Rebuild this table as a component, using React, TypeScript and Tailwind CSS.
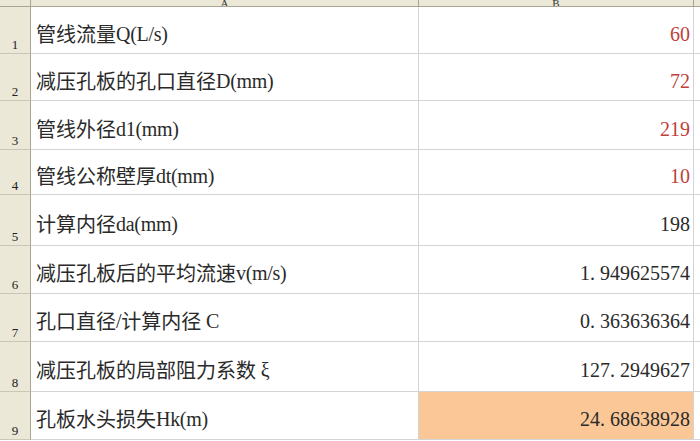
type Row = { n: number; label: string; value: string; h: number; red?: boolean; fill?: boolean };

const rows: Row[] = [
  { n: 1, label: "管线流量Q(L/s)", value: "60", h: 47, red: true },
  { n: 2, label: "减压孔板的孔口直径D(mm)", value: "72", h: 47, red: true },
  { n: 3, label: "管线外径d1(mm)", value: "219", h: 49, red: true },
  { n: 4, label: "管线公称壁厚dt(mm)", value: "10", h: 45, red: true },
  { n: 5, label: "计算内径da(mm)", value: "198", h: 51 },
  { n: 6, label: "减压孔板后的平均流速v(m/s)", value: "1.949625574", h: 48 },
  { n: 7, label: "孔口直径/计算内径 C", value: "0.363636364", h: 48 },
  { n: 8, label: "减压孔板的局部阻力系数 ξ", value: "127.2949627", h: 50 },
  { n: 9, label: "孔板水头损失Hk(m)", value: "24.68638928", h: 48, fill: true },
];

// split CJK from latin so the latin part gets a serif face like SimSun's
function Mixed({ text }: { text: string }) {
  const parts = text.split(/([\u0000-\u00ff\u0370-\u03ff]+)/).filter(Boolean);
  return (
    <>
      {parts.map((p, i) =>
        /^[\u0000-\u00ff\u0370-\u03ff]+$/.test(p) ? (
          <span key={i} className="font-['Liberation_Serif',serif] tracking-[-0.3px] whitespace-pre">
            {p}
          </span>
        ) : (
          <span key={i} className="font-['Noto_Sans_CJK_SC',sans-serif]">
            {p}
          </span>
        )
      )}
    </>
  );
}

// half-width digits; the dot gets a full digit cell as in SimSun
function Num({ value }: { value: string }) {
  return (
    <span className="font-['Liberation_Serif',serif]">
      {value.split("").map((c, i) =>
        c === "." ? (
          <span key={i} className="inline-block w-[10px] text-left">
            .
          </span>
        ) : (
          <span key={i}>{c}</span>
        )
      )}
    </span>
  );
}

export default function App() {
  return (
    <div className="h-[441px] w-[700px] overflow-hidden bg-white text-[20px] text-[#2a2a2a]">
      <div className="grid h-[7px] grid-cols-[31px_388px_275px_1fr] border-b border-[#a9a593] bg-[#ebe8d8]">
        <div className="border-r border-[#a9a593]" />
        <div className="flex items-end justify-center overflow-hidden border-r border-[#a9a593] font-['Liberation_Serif',serif] text-[11px] leading-[12px] text-[#333]">
          <span className="-mb-[3px]">A</span>
        </div>
        <div className="flex items-end justify-center overflow-hidden border-r border-[#a9a593] font-['Liberation_Serif',serif] text-[11px] leading-[12px] text-[#333]">
          <span className="-mb-[3px]">B</span>
        </div>
        <div />
      </div>
      {rows.map((r) => (
        <div
          key={r.n}
          className="grid grid-cols-[31px_388px_275px_1fr]"
          style={{ height: r.h }}
        >
          <div className="flex items-end justify-center border-b border-r border-b-[#cbc7b5] border-r-[#a9a593] bg-[#ebe8d8] pb-[1px] font-['Liberation_Serif',serif] text-[13px] leading-[14px] text-[#222]">
            {r.n}
          </div>
          <div className="flex items-center border-b border-r border-[#d4d4d4] pl-[5px] pt-[7px] leading-none">
            <Mixed text={r.label} />
          </div>
          <div
            className={`flex items-center justify-end border-b border-r border-[#d4d4d4] pr-[3px] pt-[7px] leading-none ${
              r.red ? "text-[#c0403c]" : "text-[#2a2a2a]"
            } ${r.fill ? "bg-[#fbc796]" : ""}`}
          >
            <Num value={r.value} />
          </div>
          <div className="border-b border-[#d4d4d4]" />
        </div>
      ))}
    </div>
  );
}
